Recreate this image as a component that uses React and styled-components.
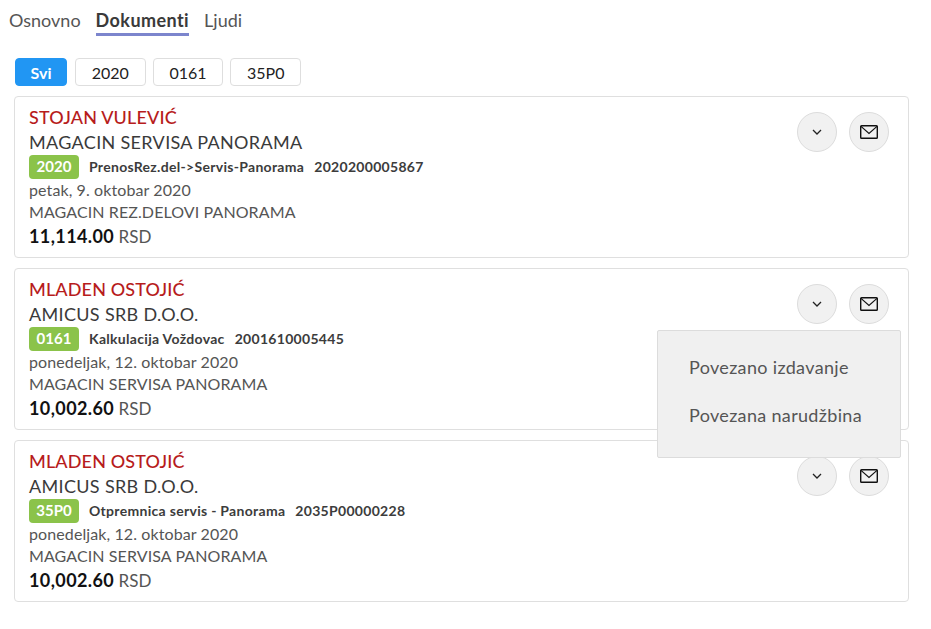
import React from 'react';
import styled, { createGlobalStyle } from 'styled-components';

const GlobalStyle = createGlobalStyle`
  body {
    margin: 0;
    background: #fff;
    font-family: "Lato", "Noto Sans", sans-serif;
    color: #3c3c3c;
  }
`;

const documents = [
  {
    name: 'STOJAN VULEVIĆ',
    company: 'MAGACIN SERVISA PANORAMA',
    code: '2020',
    type: 'PrenosRez.del->Servis-Panorama',
    number: '2020200005867',
    date: 'petak, 9. oktobar 2020',
    warehouse: 'MAGACIN REZ.DELOVI PANORAMA',
    amount: '11,114.00',
  },
  {
    name: 'MLADEN OSTOJIĆ',
    company: 'AMICUS SRB D.O.O.',
    code: '0161',
    type: 'Kalkulacija Voždovac',
    number: '2001610005445',
    date: 'ponedeljak, 12. oktobar 2020',
    warehouse: 'MAGACIN SERVISA PANORAMA',
    amount: '10,002.60',
    menuOpen: true,
  },
  {
    name: 'MLADEN OSTOJIĆ',
    company: 'AMICUS SRB D.O.O.',
    code: '35P0',
    type: 'Otpremnica servis - Panorama',
    number: '2035P00000228',
    date: 'ponedeljak, 12. oktobar 2020',
    warehouse: 'MAGACIN SERVISA PANORAMA',
    amount: '10,002.60',
  },
];

function ChevronIcon() {
  return (
    <svg width="10" height="7" viewBox="0 0 10 7" fill="none">
      <path d="M1 1 L5 5 L9 1" stroke="#222" strokeWidth="1.3" />
    </svg>
  );
}

function MailIcon() {
  return (
    <svg width="18" height="14" viewBox="0 0 18 14" fill="none">
      <rect x="0.7" y="0.7" width="16.6" height="12.6" rx="0.8" stroke="#111" strokeWidth="1.4" />
      <path d="M1 1.4 L9 8.4 L17 1.4" stroke="#111" strokeWidth="1.2" />
    </svg>
  );
}

function DocumentCard({ doc }) {
  return (
    <Card>
      <Name>{doc.name}</Name>
      <Company>{doc.company}</Company>
      <MetaRow>
        <Badge>{doc.code}</Badge>
        <MetaText>{doc.type}</MetaText>
        <MetaText>{doc.number}</MetaText>
      </MetaRow>
      <Detail>{doc.date}</Detail>
      <Detail>{doc.warehouse}</Detail>
      <Total>
        <strong>{doc.amount}</strong> RSD
      </Total>
      <Actions>
        <RoundButton><ChevronIcon /></RoundButton>
        <RoundButton><MailIcon /></RoundButton>
      </Actions>
      {doc.menuOpen && (
        <Menu>
          <MenuItem>Povezano izdavanje</MenuItem>
          <MenuItem>Povezana narudžbina</MenuItem>
        </Menu>
      )}
    </Card>
  );
}

function App() {
  return (
    <Page>
      <GlobalStyle />
      <Tabs>
        <Tab>Osnovno</Tab>
        <Tab $active>Dokumenti</Tab>
        <Tab>Ljudi</Tab>
      </Tabs>
      <Filters>
        <Filter $active $width={52.8}>Svi</Filter>
        <Filter $width={71}>2020</Filter>
        <Filter $width={70}>0161</Filter>
        <Filter $width={71}>35P0</Filter>
      </Filters>
      <CardList>
        {documents.map((doc) => (
          <DocumentCard key={doc.number} doc={doc} />
        ))}
      </CardList>
    </Page>
  );
}

export default App;

const Page = styled.div`
  padding: 0 22px 0 14px;
`;

const Tabs = styled.div`
  display: flex;
  gap: 15px;
  padding-top: 8px;
  margin-left: -5px;
  height: 49px;
  box-sizing: border-box;
`;

const Tab = styled.div`
  height: 25px;
  line-height: 24px;
  font-size: 18px;
  letter-spacing: ${(p) => (p.$active ? '0.42px' : '0')};
  font-weight: ${(p) => (p.$active ? 700 : 400)};
  color: ${(p) => (p.$active ? '#3a3a3a' : '#555')};
  border-bottom: 3px solid ${(p) => (p.$active ? '#7c85cd' : 'transparent')};
`;

const Filters = styled.div`
  display: flex;
  gap: 7.3px;
  margin-top: 9px;
  margin-left: 0.6px;
`;

const Filter = styled.button`
  box-sizing: border-box;
  width: ${(p) => p.$width}px;
  height: 28px;
  padding: 0;
  border-radius: 4px;
  border: 1px solid ${(p) => (p.$active ? '#2196f3' : '#dedede')};
  background: ${(p) => (p.$active ? '#2196f3' : '#fff')};
  color: ${(p) => (p.$active ? '#fff' : '#222')};
  font-family: inherit;
  font-size: 16px;
  font-weight: ${(p) => (p.$active ? 700 : 400)};
`;

const CardList = styled.div`
  display: flex;
  flex-direction: column;
  gap: 10px;
  margin-top: 10px;
`;

const Card = styled.div`
  position: relative;
  box-sizing: border-box;
  height: 162px;
  padding: 9px 14px;
  border: 1px solid #dfdfdf;
  border-radius: 4px;
  background: #fff;
`;

const Name = styled.div`
  height: 22px;
  line-height: 22px;
  font-size: 18px;
  letter-spacing: 0.15px;
  font-weight: 500;
  color: #b71c1c;
`;

const Company = styled.div`
  height: 25px;
  line-height: 27px;
  margin-top: 1px;
  font-size: 18px;
  letter-spacing: 0.33px;
  color: #3a3a3a;
`;

const MetaRow = styled.div`
  display: flex;
  align-items: center;
  gap: 10px;
  height: 24px;
  margin-top: 1px;
`;

const Badge = styled.span`
  width: 50px;
  height: 24px;
  line-height: 23px;
  border-radius: 4px;
  background: #8bc34a;
  color: #fff;
  font-size: 15px;
  font-weight: 700;
  text-align: center;
`;

const MetaText = styled.span`
  margin-bottom: 2px;
  font-size: 14px;
  letter-spacing: 0.3px;
  font-weight: 700;
  color: #3c3c3c;
`;

const Detail = styled.div`
  height: 22px;
  line-height: 22px;
  font-size: 16px;
  letter-spacing: 0.1px;
  color: #555;
`;

const Total = styled.div`
  height: 25px;
  line-height: 26px;
  font-size: 17px;
  color: #555;

  > strong {
    color: #111;
    font-size: 18px;
    letter-spacing: 0.4px;
  }
`;

const Actions = styled.div`
  position: absolute;
  top: 15px;
  right: 19px;
  display: flex;
  gap: 12px;
`;

const RoundButton = styled.button`
  display: flex;
  align-items: center;
  justify-content: center;
  width: 40px;
  height: 40px;
  padding: 0;
  border: 1px solid #dcdcdc;
  border-radius: 50%;
  background: #f1f1f1;
`;

const Menu = styled.div`
  position: absolute;
  z-index: 2;
  top: 61px;
  right: 7px;
  box-sizing: border-box;
  width: 244px;
  height: 128px;
  padding: 13px 0;
  border: 1px solid #dcdcdc;
  border-radius: 2px;
  background: #f0f0f0;
`;

const MenuItem = styled.div`
  height: 48px;
  line-height: 46px;
  padding-left: 31px;
  font-size: 18px;
  letter-spacing: 0.33px;
  color: #555;
`;
